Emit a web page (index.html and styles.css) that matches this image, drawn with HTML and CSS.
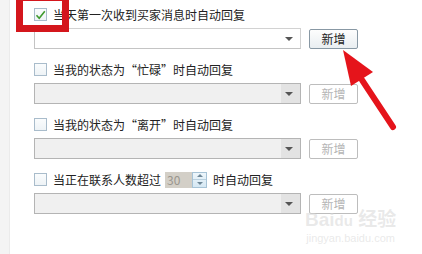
FILE: index.html
```html
<!DOCTYPE html>
<html lang="zh-CN">
  <head>
    <meta charset="UTF-8" />
    <title>自动回复</title>
    <link rel="stylesheet" href="styles.css">
  </head>
  <body>
    <div class="page">
      <div class="strip"></div>
      <main class="panel">
        <section class="group">
          <label class="head">
            <span class="check checked">
              <svg width="11" height="10" viewBox="0 0 11 10"><path d="M1.5 5.2 L4.2 8.2 L9.8 1.2" fill="none" stroke="#3f9a2e" stroke-width="1.6"/></svg>
            </span>
            当天第一次收到买家消息时自动回复
          </label>
          <div class="row">
            <div class="select"><span class="arrow"></span></div>
            <button class="btn">新增</button>
          </div>
        </section>

        <section class="group">
          <label class="head"><span class="check"></span>当我的状态为“忙碌”时自动回复</label>
          <div class="row">
            <div class="select off"><span class="arrow"></span></div>
            <button class="btn" disabled>新增</button>
          </div>
        </section>

        <section class="group">
          <label class="head"><span class="check"></span>当我的状态为“离开”时自动回复</label>
          <div class="row">
            <div class="select off"><span class="arrow"></span></div>
            <button class="btn" disabled>新增</button>
          </div>
        </section>

        <section class="group">
          <label class="head">
            <span class="check"></span>当正在联系人数超过
            <span class="spin">
              <span class="spin-val">30</span>
              <span class="spin-btns"><i class="up"></i><i class="down"></i></span>
            </span>
            时自动回复
          </label>
          <div class="row">
            <div class="select off"><span class="arrow"></span></div>
            <button class="btn" disabled>新增</button>
          </div>
        </section>
      </main>
    </div>

    <div class="frame"></div>
    <svg class="pointer" width="422" height="254" viewBox="0 0 422 254">
      <line x1="362" y1="80" x2="393" y2="127" stroke="#e5141b" stroke-width="6" stroke-linecap="round"/>
      <polygon points="343,50 373,72 351,86" fill="#e5141b"/>
    </svg>
    <div class="mark">
      <div class="mark-logo">Bai<span>du</span> 经验</div>
      <div class="mark-url">jingyan.baidu.com</div>
    </div>
  </body>
</html>
```

FILE: styles.css
```css
body {
  margin: 0;
  background: #fff;
  font-family: "Noto Sans CJK SC", "Liberation Sans", sans-serif;
  font-size: 12px;
  color: #222;
}
.page {
  display: flex;
  height: 254px;
  overflow: hidden;
}
.strip {
  width: 9px;
  background: #f4f4f4;
  border-right: 1px solid #ebebeb;
}
.panel {
  flex: 1;
  padding: 4px 0 0 24px;
}
.group {
  margin-bottom: 10px;
}
.head {
  display: flex;
  align-items: center;
  height: 21px;
  line-height: 21px;
}
.check {
  width: 11px;
  height: 11px;
  border: 1px solid #a9bccb;
  background: linear-gradient(#fafcfd, #eef3f6);
  margin-right: 6px;
  display: flex;
  align-items: center;
  justify-content: center;
}
.row {
  display: flex;
  align-items: center;
  gap: 8px;
  margin-top: 3px;
}
.select {
  position: relative;
  width: 265px;
  height: 19px;
  border: 1px solid #d2d2d2;
  border-left-color: #c4c4c4;
  border-bottom-color: #c4c4c4;
  background: #fff;
}
.select.off {
  border-color: #b4b4b4;
  background: linear-gradient(to right, #f0f0f0 93%, #e3e3e3 93%);
}
.arrow {
  position: absolute;
  right: 7px;
  top: 8px;
  border-left: 4px solid transparent;
  border-right: 4px solid transparent;
  border-top: 4px solid #555;
}
.btn {
  width: 49px;
  height: 20px;
  padding: 0;
  border: 1px solid #8898a4;
  border-radius: 2px;
  background: linear-gradient(#fdfdfd, #e9eef1);
  font: inherit;
  color: #222;
}
.btn:disabled {
  border-color: #bdbdbd;
  background: #fff;
  color: #b5b5b5;
}
.spin {
  display: flex;
  height: 16px;
  margin: 0 6px 0 4px;
}
.spin-val {
  width: 27px;
  background: #d3cfc7;
  color: #9a968e;
  line-height: 16px;
  padding-left: 2px;
  box-sizing: border-box;
}
.spin-btns {
  width: 15px;
  display: flex;
  flex-direction: column;
  border: 1px solid #a7c3d6;
  box-sizing: border-box;
  background: linear-gradient(#eef6fb, #d6e8f3);
}
.spin-btns i {
  flex: 1;
  display: flex;
  align-items: center;
  justify-content: center;
}
.spin-btns i::after {
  content: "";
  border-left: 3px solid transparent;
  border-right: 3px solid transparent;
}
.spin-btns .up::after {
  border-bottom: 3px solid #6f8797;
}
.spin-btns .down {
  border-top: 1px solid #b9d0df;
}
.spin-btns .down::after {
  border-top: 3px solid #6f8797;
}
.frame {
  position: absolute;
  left: 16px;
  top: -6px;
  width: 39px;
  height: 24px;
  border: 7px solid #d4161c;
}
.pointer {
  position: absolute;
  left: 0;
  top: 0;
}
.mark {
  position: absolute;
  left: 305px;
  top: 211px;
  color: rgba(215, 215, 215, 0.55);
  text-align: center;
}
.mark-logo {
  font-family: "Liberation Sans", "Noto Sans CJK SC", sans-serif;
  font-size: 19px;
  font-weight: bold;
  line-height: 18px;
}
.mark-logo span {
  font-size: 15px;
}
.mark-url {
  font-family: "Liberation Sans", sans-serif;
  font-size: 11px;
  line-height: 12px;
  margin-top: 2px;
}
```
